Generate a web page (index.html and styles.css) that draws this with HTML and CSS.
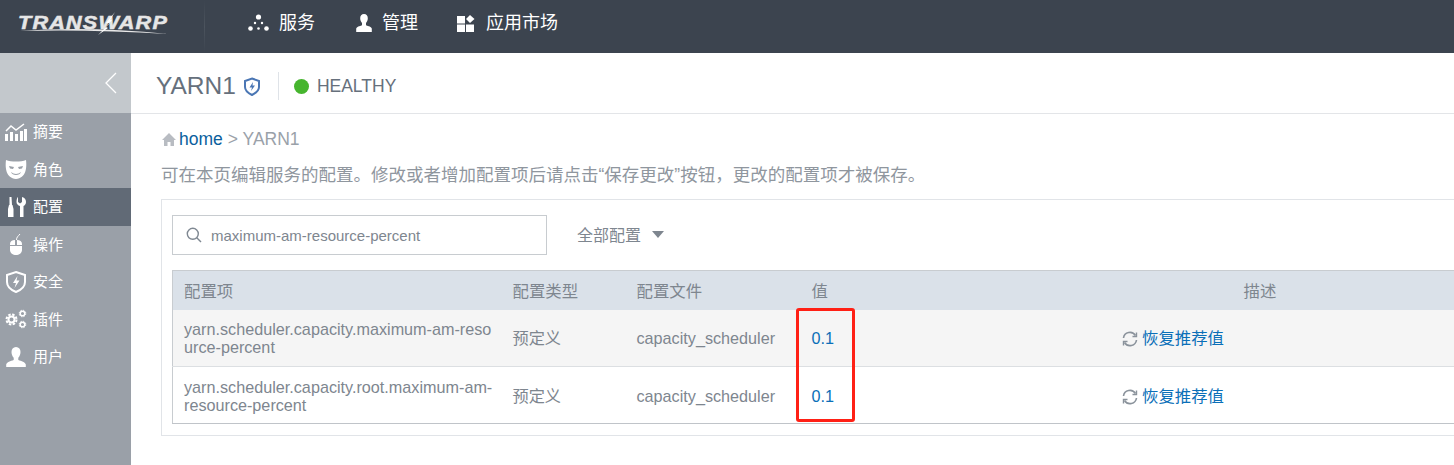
FILE: index.html
```html
<!DOCTYPE html>
<html lang="zh-CN">
<head>
<meta charset="utf-8">
<title>YARN1</title>
<link rel="stylesheet" href="styles.css">
</head>
<body>
<header class="topbar">
  <div class="logo">
    <span class="logo-text">TRANSWARP</span>
    <svg class="logo-swoosh" viewBox="0 0 152 30" width="152" height="30"><path d="M2 23 Q70 18 150 26 Q70 21 2 23Z" fill="#e8e8e8"/><path d="M97 4 L88 15 L92 15 L80 27 L90 20 L88 19 L94 12 L92 12Z" fill="#fff"/></svg>
  </div>
  <div class="top-divider"></div>
  <nav class="topnav">
    <a class="topnav-item">
      <svg width="21" height="17" viewBox="0 0 21 17" fill="#fff"><circle cx="10.5" cy="3" r="2.6"/><circle cx="7" cy="9" r="1.2"/><circle cx="14" cy="9" r="1.2"/><circle cx="2.5" cy="14.500" r="2.300"/><circle cx="10.500" cy="14.500" r="1.300"/><circle cx="18.500" cy="14.500" r="2.300"/></svg>
      <span>服务</span>
    </a>
    <a class="topnav-item">
      <svg width="16" height="18" viewBox="0 0 16 18" fill="#fff"><path d="M8 0c2.500 0 3.800 1.800 3.800 4.300 0 2-.9 3.700-1.800 4.700v2.200c2.500.8 5.500 1.700 5.800 3.300V18H.2v-3.500c.3-1.600 3.300-2.500 5.800-3.300V9C5.100 8 4.200 6.300 4.200 4.300 4.200 1.800 5.500 0 8 0z"/></svg>
      <span>管理</span>
    </a>
    <a class="topnav-item">
      <svg width="19" height="18" viewBox="0 0 19 18" fill="#fff"><rect x="0" y="2" width="8" height="7.500"/><rect x="0" y="10.500" width="8" height="7.500"/><rect x="9" y="10.500" width="8" height="7.500"/><path d="M13 1l4.500 4-4.500 4-4-4z"/></svg>
      <span>应用市场</span>
    </a>
  </nav>
</header>
<div class="layout">
  <aside class="sidebar">
    <div class="collapse">
      <svg width="14" height="22" viewBox="0 0 14 22" fill="none" stroke="#fff" stroke-width="1.300"><path d="M12 1 L2 11 L12 21"/></svg>
    </div>
    <ul class="side-menu">
      <li class="side-item">
        <svg width="22" height="18" viewBox="0 0 22 18" fill="#fff"><rect x="0" y="11" width="3" height="7"/><rect x="5" y="9" width="3" height="9"/><rect x="10" y="11" width="3" height="7"/><rect x="15" y="8" width="3" height="10"/><rect x="19" y="6" width="3" height="12"/><path d="M1 8 L6 3 L11 7 L19 1" fill="none" stroke="#fff" stroke-width="1.500"/></svg>
        <span>摘要</span>
      </li>
      <li class="side-item">
        <svg width="22" height="20" viewBox="0 0 22 20" fill="#fff"><path d="M1 1c5 2 15 2 20 0 1 8 0 18-10 19C1 19 0 9 1 1z"/><path d="M4 7l5 1-1 2-3-.5zM18 7l-5 1 1 2 3-.5z" fill="#9aa0a8"/><path d="M6 13c3 2.500 7 2.500 10 0-1 4-9 4-10 0z" fill="#9aa0a8"/></svg>
        <span>角色</span>
      </li>
      <li class="side-item is-active">
        <svg width="22" height="20" viewBox="0 0 22 20" fill="#fff"><path d="M4.500 0h2l.5 8h.5l1 4v8H3v-8l1-4h.5z"/><path d="M13 0v5l2 1.500L17 5V0c3 .8 4 3 4 5 0 2-1.200 3.500-2.500 4v11h-3.500V9C13 8.500 11.500 7 11.500 5c0-2 .5-4.200 1.500-5z"/></svg>
        <span>配置</span>
      </li>
      <li class="side-item">
        <svg width="22" height="22" viewBox="0 0 22 22" fill="#fff"><path d="M11.500 7C11.500 4 13 3.500 15 1" fill="none" stroke="#fff"/><path d="M5 11c0-2.500 2-4 5-4v5H5zM12 7c3 0 5 1.500 5 4v1h-5zM5 13h12v4c0 3-3 5-6 5s-6-2-6-5z"/></svg>
        <span>操作</span>
      </li>
      <li class="side-item">
        <svg width="22" height="24" viewBox="0 0 22 24" fill="none" stroke="#fff" stroke-width="2"><path d="M11 2 L20 5 V12 C20 17 16 20 11 22 C6 20 2 17 2 12 V5Z"/><path d="M12.500 6 L8 13 H11 L9.500 18 L14.500 10.500 H11.500Z" fill="#fff" stroke="none"/></svg>
        <span>安全</span>
      </li>
      <li class="side-item">
        <svg width="22" height="20" viewBox="0 0 22 20" fill="none" stroke="#fff"><circle cx="6.500" cy="10.500" r="3" stroke-width="2"/><circle cx="6.500" cy="10.500" r="5" stroke-width="2" stroke-dasharray="2.500 1.430"/><circle cx="17.500" cy="4.500" r="2.300" stroke-width="1.500"/><circle cx="17.500" cy="4.500" r="3.300" stroke-width="1" stroke-dasharray="1.500 1.090"/><circle cx="17.500" cy="15.500" r="2.300" stroke-width="1.500"/><circle cx="17.500" cy="15.500" r="3.300" stroke-width="1" stroke-dasharray="1.500 1.090"/></svg>
        <span>插件</span>
      </li>
      <li class="side-item">
        <svg width="22" height="22" viewBox="0 0 22 22" fill="#fff"><path d="M11 1c3 0 4.500 2.200 4.500 5 0 2.500-1 4.500-2.200 5.700V14c3 1 7 2.200 7.500 4.500V21H1.200v-2.500C1.700 16.200 5.700 15 8.700 14v-2.300C7.500 10.500 6.500 8.500 6.500 6 6.500 3.200 8 1 11 1z"/></svg>
        <span>用户</span>
      </li>
    </ul>
  </aside>
  <main class="main">
    <div class="service-head">
      <h1 class="service-name">YARN1</h1>
      <svg class="service-shield" width="16" height="19" viewBox="0 0 16 19" fill="none" stroke="#4a76b4" stroke-width="2"><path d="M8 1.500 L15 4 V10 C15 14 12 16 8 18 C4 16 1 14 1 10 V4Z"/><path d="M9 5 L5.500 10.500 H8 L7 14 L11 8.500 H8.500Z" fill="#4a76b4" stroke="none"/></svg>
      <div class="head-divider"></div>
      <span class="status-dot"></span>
      <span class="status-text">HEALTHY</span>
    </div>
    <div class="content">
      <div class="crumbs">
        <svg width="14" height="13" viewBox="0 0 14 13" fill="#b8bcc2"><path d="M7 0 L14 7 H12 V13 H8.500 V9 H5.500 V13 H2 V7 H0Z"/></svg>
        <a class="crumb-link">home</a>
        <span class="crumb-rest">&gt; YARN1</span>
      </div>
      <p class="hint">可在本页编辑服务的配置。修改或者增加配置项后请点击“保存更改”按钮，更改的配置项才被保存。</p>
      <section class="panel">
        <div class="toolbar">
          <div class="search">
            <svg width="16" height="16" viewBox="0 0 16 16" fill="none" stroke="#7f8892" stroke-width="1.400"><circle cx="6.800" cy="6.800" r="5.500"/><path d="M10.800 10.800 L15 15"/></svg>
            <span class="search-value">maximum-am-resource-percent</span>
          </div>
          <div class="filter">
            <span>全部配置</span>
            <span class="caret"></span>
          </div>
        </div>
        <table class="config">
          <colgroup>
            <col class="c-name"><col class="c-type"><col class="c-file"><col class="c-value"><col class="c-desc">
          </colgroup>
          <thead>
            <tr><th>配置项</th><th>配置类型</th><th>配置文件</th><th>值</th><th class="th-desc">描述</th></tr>
          </thead>
          <tbody>
            <tr class="row-alt">
              <td class="name">yarn.scheduler.capacity.maximum-am-resource-percent</td>
              <td>预定义</td>
              <td>capacity_scheduler</td>
              <td class="value">0.1</td>
              <td class="restore-cell">
                <svg width="16" height="16" viewBox="0 0 16 16" fill="none" stroke="#8a929b" stroke-width="1.600"><path d="M1.500 7A6.500 6.500 0 0 1 13.500 4.500"/><path d="M14.500 9A6.500 6.500 0 0 1 2.500 11.500"/><path d="M14.500 1.500V5.500H10.500" stroke-width="1.400"/><path d="M1.500 14.500V10.500H5.500" stroke-width="1.400"/></svg>
                <a class="restore">恢复推荐值</a>
              </td>
            </tr>
            <tr>
              <td class="name">yarn.scheduler.capacity.root.maximum-am-<br>resource-percent</td>
              <td>预定义</td>
              <td>capacity_scheduler</td>
              <td class="value">0.1</td>
              <td class="restore-cell">
                <svg width="16" height="16" viewBox="0 0 16 16" fill="none" stroke="#8a929b" stroke-width="1.600"><path d="M1.500 7A6.500 6.500 0 0 1 13.500 4.500"/><path d="M14.500 9A6.500 6.500 0 0 1 2.500 11.500"/><path d="M14.500 1.500V5.500H10.500" stroke-width="1.400"/><path d="M1.500 14.500V10.500H5.500" stroke-width="1.400"/></svg>
                <a class="restore">恢复推荐值</a>
              </td>
            </tr>
          </tbody>
        </table>
      </section>
    </div>
    <div class="annotation"></div>
  </main>
</div>
</body>
</html>
```
FILE: styles.css
```css
* { box-sizing: border-box; }
html, body { height: 100%; }
body {
  margin: 0;
  overflow: hidden;
  background: #fff;
  color: #7e868f;
  font-family: "Liberation Sans", "Noto Sans CJK SC", sans-serif;
  font-size: 14px;
}
.topbar {
  height: 53px;
  background: #3c444f;
  display: flex;
  align-items: center;
}
.logo {
  width: 204px;
  height: 53px;
  position: relative;
  flex: none;
}
.logo-text {
  position: absolute;
  left: 18px;
  top: 12px;
  font-size: 18px;
  line-height: 22px;
  font-weight: 700;
  font-style: italic;
  letter-spacing: 1px;
  color: #e6e6e6;
  white-space: nowrap;
  transform: scaleX(1.2);
  transform-origin: left center;
  -webkit-text-stroke: 0.5px #e6e6e6;
}
.logo-swoosh { position: absolute; left: 18px; top: 8px; }
.top-divider {
  width: 1px;
  height: 53px;
  background: linear-gradient(#3c444f, #4c545e 50%, #3c444f);
  flex: none;
}
.topnav { display: flex; margin: 0 0 8px 43px; }
.topnav-item {
  display: flex;
  align-items: center;
  gap: 10px;
  color: #fff;
  font-size: 18px;
  line-height: 24px;
  margin-right: 41px;
}
.topnav-item:nth-child(2) { margin-right: 39px; }
.layout { display: flex; height: 412px; }
.sidebar { width: 131px; flex: none; background: #9aa0a8; color: #fff; }
.collapse {
  height: 60px;
  background: #c3c8cc;
  display: flex;
  align-items: center;
  justify-content: flex-end;
  padding-right: 13px;
}
.side-menu { list-style: none; margin: 0; padding: 0; }
.side-item {
  height: 37.5px;
  display: flex;
  align-items: center;
  gap: 6px;
  padding-left: 5px;
  font-size: 15px;
  color: #fff;
}
.side-item span { margin-bottom: 2px; }
.side-item svg { flex: none; width: 22px; }
.is-active { background: #616a76; }
.main { flex: 1; min-width: 0; position: relative; overflow: hidden; }
.service-head {
  height: 61px;
  display: flex;
  align-items: center;
  padding: 6px 0 0 25px;
  border-bottom: 1px solid #e3e5e8;
}
.service-name {
  margin: 0;
  font-size: 24.5px;
  font-weight: 400;
  line-height: 30px;
  color: #66707c;
}
.service-shield { margin-left: 8px; }
.head-divider { width: 1px; height: 28px; background: #dfe3e8; margin: 0 15px 0 18px; }
.status-dot { width: 15px; height: 15px; border-radius: 50%; background: #46b52e; }
.status-text { margin-left: 8px; font-size: 17.500px; color: #66707c; }
.content { padding: 15px 0 0 30px; }
.crumbs { display: flex; align-items: center; height: 20px; font-size: 17.5px; }
.crumbs svg { margin: 0 3px 0 1px; }
.crumb-link { color: #0b5f9e; }
.crumb-rest { margin-left: 5px; color: #9aa1a9; }
.hint { margin: 15px 0 0; font-size: 17.5px; line-height: 22px; color: #8f969e; white-space: nowrap; }
.panel {
  margin: 13px -20px 0 0;
  height: 237px;
  border: 1px solid #e1e4e8;
  padding: 15px 0 0 10px;
}
.toolbar { display: flex; align-items: center; }
.search {
  width: 375px;
  height: 40px;
  border: 1px solid #c8ccd0;
  display: flex;
  align-items: center;
  padding-left: 13px;
  gap: 9px;
}
.search-value { font-size: 15px; color: #7e868f; }
.filter {
  margin-left: 30px;
  display: flex;
  align-items: center;
  gap: 11px;
  font-size: 16px;
  color: #7e868f;
  padding-bottom: 2px;
}
.caret {
  width: 0;
  height: 0;
  border-left: 6.5px solid transparent;
  border-right: 6.5px solid transparent;
  border-top: 7px solid #7e868f;
}
.config {
  width: 1303px;
  margin-top: 15px;
  border-collapse: collapse;
  table-layout: fixed;
  border-left: 1px solid #c8ccd0;
  border-top: 1px solid #c8ccd0;
  border-bottom: 1px solid #c0c4c9;
}
.c-name { width: 329px; }
.c-type { width: 124px; }
.c-file { width: 175px; }
.c-value { width: 310px; }
th {
  height: 39px;
  background: #dae1e9;
  font-weight: 400;
  font-size: 16.4px;
  text-align: left;
  padding: 0 0 0 11px;
  color: #7e868f;
}
.th-desc { padding-left: 133px; }
td {
  height: 57px;
  padding: 0 0 0 11px;
  font-size: 16.2px;
  line-height: 18px;
  border-bottom: 1px solid #dcdfe2;
  color: #7e868f;
}
tbody tr:last-child td { border-bottom: 0; padding-top: 2px; }
.row-alt { background: #f5f5f5; }
.name { word-break: break-all; padding-right: 6px; }
.value { color: #0b6fb8; }
.restore-cell svg { vertical-align: -3px; }
.restore { color: #0b6fb8; font-size: 16.4px; }
.annotation {
  position: absolute;
  left: 665px;
  top: 255px;
  width: 59px;
  height: 114px;
  border: 3px solid #ff2015;
  border-radius: 3px;
}
```
